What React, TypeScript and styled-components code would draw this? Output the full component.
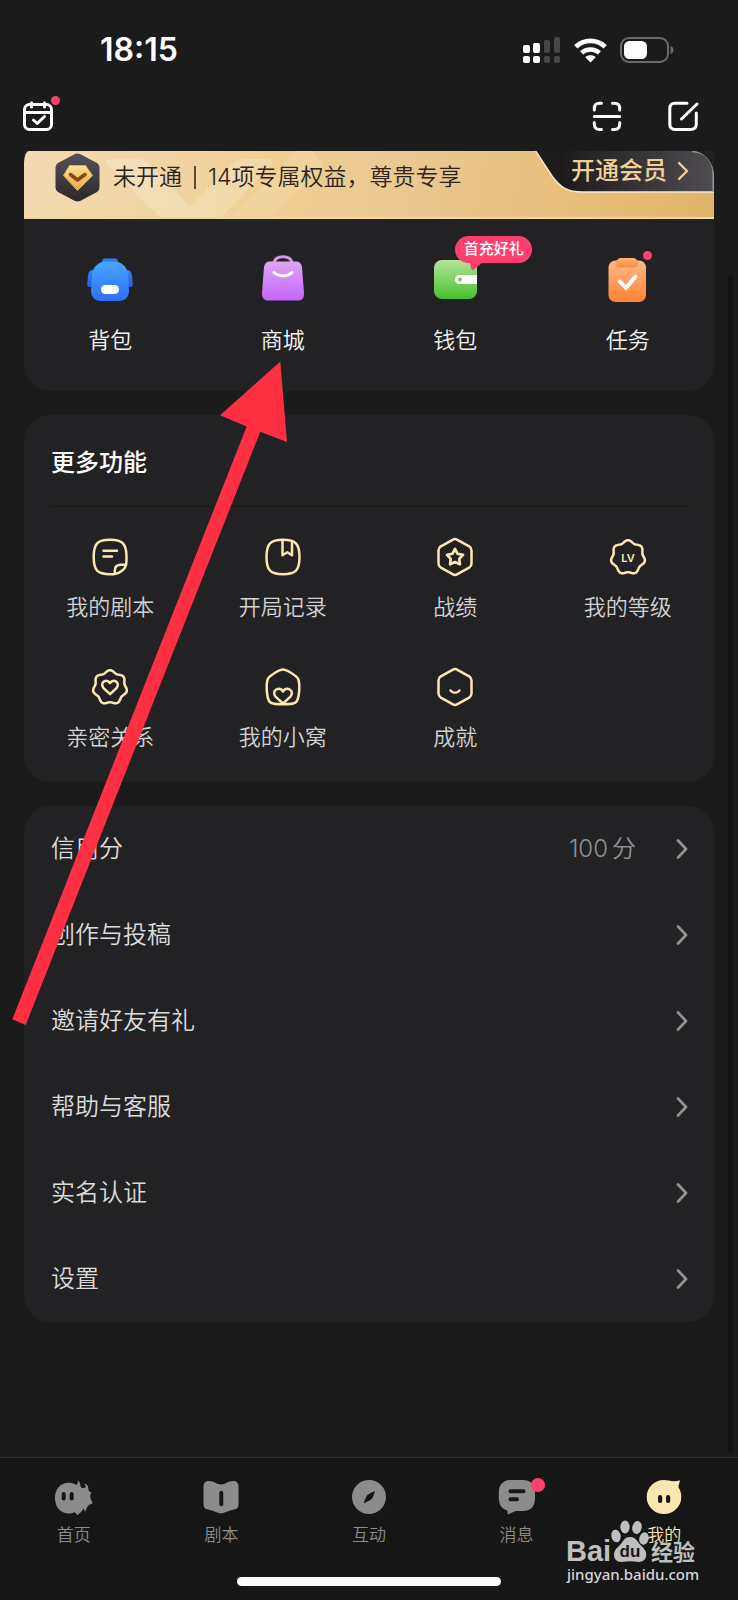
import React from "react";
import styled, { createGlobalStyle } from "styled-components";

const GlobalStyle = createGlobalStyle`
  *, *::before, *::after { box-sizing: border-box; }
  body {
    margin: 0;
    background: #1b1b1b;
    color: #f4f4f4;
    font-family: Inter, "Noto Sans CJK SC", sans-serif;
    font-weight: 350;
  }
  button {
    border: 0;
    padding: 0;
    background: none;
    color: inherit;
    font: inherit;
    cursor: pointer;
  }
  a { color: inherit; text-decoration: none; }
  svg { display: block; }
`;

const cream = "#fde6b0";
const pink = "#ff3f70";

const Page = styled.div`
  position: relative;
  min-height: 100vh;
  display: flex;
  flex-direction: column;
`;

const StatusBar = styled.header`
  height: 100px;
  padding: 0 64px 0 100px;
  display: flex;
  align-items: center;
  justify-content: space-between;
`;

const Clock = styled.time`
  font-size: 32px;
  line-height: 40px;
  font-weight: 600;
  color: #fff;
`;

const StatusIcons = styled.div`
  display: flex;
  align-items: center;
  gap: 13px;
`;

const TopBar = styled.div`
  display: flex;
  align-items: flex-start;
  justify-content: space-between;
  padding: 0 39px 19px 22px;
`;

const TopActions = styled.div`
  display: flex;
  gap: 44px;
`;

const IconButton = styled.button`
  position: relative;
  width: 32px;
  height: 32px;
`;

const Dot = styled.span<{ $size: number; $top: number; $right: number }>`
  position: absolute;
  width: ${(p) => p.$size}px;
  height: ${(p) => p.$size}px;
  top: ${(p) => p.$top}px;
  right: ${(p) => p.$right}px;
  border-radius: 50%;
  background: ${pink};
`;

const Content = styled.main`
  flex: 1;
  display: flex;
  flex-direction: column;
  gap: 24px;
  padding: 0 24px 48px;
`;

const Card = styled.section<{ $flatTop?: boolean }>`
  background: #222224;
  border-radius: ${(p) => (p.$flatTop ? "0 0 26px 26px" : "26px")};
`;

const Banner = styled.div`
  position: relative;
  height: 68px;
  display: flex;
  align-items: flex-start;
  overflow: hidden;
  border-radius: 5px 22px 0 0 / 12px 26px 0 0;
  border-bottom: 2px solid #f4d798;
  background: linear-gradient(100deg, #f3dab0 0%, #f1d6a6 18%, #efce8f 38%, #ebca94 50%, #e8c282 72%, #e2b468 100%);
`;

const BannerArt = styled.svg`
  position: absolute;
  left: 0;
  top: 0;
`;

const BannerInfo = styled.div`
  position: relative;
  flex: 1;
  display: flex;
  align-items: center;
  gap: 13px;
  height: 52px;
  padding-left: 31px;
  color: #2c231b;
  font-size: 23px;
  line-height: 32px;
  white-space: nowrap;
`;

const BannerText = styled.span`
  display: flex;
  align-items: center;
  gap: 12px;
`;

const BannerDivider = styled.i`
  width: 2px;
  height: 23px;
  background: #5c4a36;
`;

const VipButton = styled.button`
  position: relative;
  width: 180px;
  height: 43px;
  padding: 0 25px 3px 37px;
  display: flex;
  align-items: center;
  justify-content: space-between;
  color: #f1cf95;
  font-size: 24px;
  line-height: 32px;
  font-weight: 500;
  white-space: nowrap;

  > span, > svg { position: relative; }
  > svg:first-child { position: absolute; left: 0; top: 0; }
`;

const Shortcuts = styled.nav`
  display: grid;
  grid-template-columns: repeat(4, 1fr);
  padding: 35px 0 37px;
`;

const Shortcut = styled.button`
  display: flex;
  flex-direction: column;
  align-items: center;
  gap: 24px;
  font-size: 22px;
  line-height: 28px;
`;

const ShortcutIcon = styled.span`
  position: relative;
  width: 48px;
  height: 48px;
`;

const Bubble = styled.span`
  position: absolute;
  left: 24px;
  top: -18px;
  height: 27px;
  width: 77px;
  border-radius: 14px;
  background: ${pink};
  color: #fff;
  font-size: 15px;
  line-height: 26px;
  font-weight: 500;
  text-align: center;
  white-space: nowrap;

  > svg { position: absolute; left: 15px; top: 26px; }
`;

const CardTitle = styled.h2`
  margin: 0 25px;
  padding: 31px 2px 27px;
  border-bottom: 1px solid #19191a;
  font-size: 24px;
  line-height: 33px;
  font-weight: 500;
  color: #fff;
`;

const FeatureGrid = styled.nav`
  display: grid;
  grid-template-columns: repeat(4, 1fr);
  row-gap: 46px;
  padding: 30px 0 31px;
`;

const Feature = styled.button`
  display: flex;
  flex-direction: column;
  align-items: center;
  gap: 16px;
  color: #d2d2d3;
  font-size: 22px;
  line-height: 28px;
`;

const Row = styled.button`
  width: 100%;
  height: 86px;
  display: flex;
  align-items: center;
  padding: 0 26px 0 27px;
  color: #dcdcdd;
  font-size: 24px;
  line-height: 32px;
  text-align: left;
`;

const RowLabel = styled.span`
  flex: 1;
`;

const RowValue = styled.span`
  display: flex;
  gap: 4px;
  color: #909092;
  margin-right: 39px;
`;

const TabBar = styled.footer`
  position: relative;
  display: flex;
  flex-direction: column;
  align-items: center;
  gap: 31px;
  padding: 19px 0 14px;
  border-top: 1px solid #303030;
  background: #161616;
`;

const Tabs = styled.nav`
  width: 100%;
  display: grid;
  grid-template-columns: repeat(5, 1fr);
`;

const Tab = styled.a<{ $active?: boolean }>`
  display: flex;
  flex-direction: column;
  align-items: center;
  gap: 7px;
  color: ${(p) => (p.$active ? cream : "#8c8c8c")};
  font-size: 17px;
  line-height: 22px;
`;

const TabIcon = styled.span`
  position: relative;
  width: 40px;
  height: 40px;
`;

const HomeIndicator = styled.div`
  width: 264px;
  height: 9px;
  border-radius: 5px;
  background: #fff;
`;

const ScrollIndicator = styled.div`
  position: absolute;
  right: 5px;
  top: 275px;
  bottom: 148px;
  width: 5px;
  border-radius: 3px;
  background: #111;
`;

const ArrowOverlay = styled.svg`
  position: absolute;
  left: 12px;
  top: 361px;
  pointer-events: none;
`;

const Watermark = styled.div`
  position: absolute;
  right: 39px;
  bottom: 17px;
  width: 132px;
  display: flex;
  flex-direction: column;
  color: #bfbfbf;
  pointer-events: none;
`;

const WatermarkUrl = styled.span`
  font-family: "Noto Sans", "Open Sans", sans-serif;
  font-size: 15px;
  line-height: 18px;
  font-weight: 500;
  color: #d6d6d6;
`;

/* Seven-lobed badge outline used by the level and relationship icons. */
const badgePath = (() => {
  const steps = 140;
  const points: string[] = [];
  for (let i = 0; i < steps; i++) {
    const t = (i / steps) * Math.PI * 2;
    const r = 16 + 1.2 * Math.cos(7 * t);
    points.push(`${(20 + r * Math.sin(t)).toFixed(2)} ${(20.4 - r * Math.cos(t)).toFixed(2)}`);
  }
  return `M${points.join("L")}Z`;
})();

const hexPath =
  "M17.6 2.8Q20 1.4 22.4 2.8L34.2 9.4Q36.5 10.8 36.5 13.4V26.6Q36.5 29.2 34.2 30.6L22.4 37.2Q20 38.6 17.6 37.2L5.8 30.6Q3.5 29.2 3.5 26.6V13.4Q3.5 10.8 5.8 9.4Z";

function LineIcon({ children }: { children: React.ReactNode }) {
  return (
    <svg width="40" height="40" viewBox="0 0 40 40" fill="none" stroke={cream} strokeWidth="2.5" strokeLinecap="round" strokeLinejoin="round" aria-hidden="true">
      {children}
    </svg>
  );
}

const features = [
  {
    label: "我的剧本",
    icon: (
      <LineIcon>
        <path d="M24.8 37C23 37.2 21.5 37.2 20 37.2C7.5 37.2 3.7 33.5 3.7 20S7.5 2.8 20 2.8S36.5 6.500 36.5 20C36.5 23 36.5 25.5 36 28.2C35 32 30 36.5 24.8 37Z" />
        <path d="M24.8 36.5V33.5C24.8 29.5 27 27.7 31 27.7H35.8" />
        <path d="M13.5 13.7H27M13.5 19.4H22" />
      </LineIcon>
    ),
  },
  {
    label: "开局记录",
    icon: (
      <LineIcon>
        <path d="M20 2.8C32.5 2.8 36.5 6.5 36.5 20S32.5 37.2 20 37.2S3.5 33.5 3.5 20S7.5 2.8 20 2.8Z" />
        <path d="M19.500 3V18.300L24.300 15.300L29 18.300V4" />
      </LineIcon>
    ),
  },
  {
    label: "战绩",
    icon: (
      <LineIcon>
        <path d={hexPath} />
        <path d="M20 12L22.6 16.8L28 17.9L24.3 21.9L24.9 27.3L20 25.1L15.1 27.3L15.7 21.9L12 17.9L17.4 16.8Z" strokeWidth="2.7" />
      </LineIcon>
    ),
  },
  {
    label: "我的等级",
    icon: (
      <LineIcon>
        <path d={badgePath} />
        <text x="20" y="24.5" textAnchor="middle" fill={cream} stroke="none" fontFamily="Inter, sans-serif" fontSize="11" fontWeight="600">
          LV
        </text>
      </LineIcon>
    ),
  },
  {
    label: "亲密关系",
    icon: (
      <LineIcon>
        <path d={badgePath} />
        <path d="M20 27.2L13.8 21.3C11.5 19 11.8 15.8 13.8 14.6C16 13.3 18.500 14 20 16C21.500 14 24 13.3 26.2 14.6C28.2 15.8 28.5 19 26.2 21.3Z" />
      </LineIcon>
    ),
  },
  {
    label: "我的小窝",
    icon: (
      <LineIcon>
        <path d="M20 2.6C23 2.6 34 8.5 35.4 12.5C37 17.5 36.5 30 33.6 34.5C32 37 28 37.3 20 37.3S8 37 6.4 34.5C3.5 30 3 17.5 4.6 12.5C6 8.5 17 2.6 20 2.6Z" />
        <path d="M20 36.5L12.8 29.8C10.3 27.2 10.8 23.8 13.2 22.5C15.8 21.2 18.5 22 20 24.5C21.5 22 24.2 21.2 26.8 22.5C29.2 23.8 29.7 27.2 27.2 29.8Z" />
      </LineIcon>
    ),
  },
  {
    label: "成就",
    icon: (
      <LineIcon>
        <path d={hexPath} />
        <path d="M15.5 23.5C18 26.6 22 26.6 24.5 23.5" />
      </LineIcon>
    ),
  },
];

function GradientDef({ id, from, to }: { id: string; from: string; to: string }) {
  return (
    <linearGradient id={id} x1="0" y1="0" x2="0" y2="1">
      <stop offset="0" stopColor={from} />
      <stop offset="1" stopColor={to} />
    </linearGradient>
  );
}

const shortcuts = [
  {
    label: "背包",
    icon: (
      <svg width="48" height="48" viewBox="0 0 48 48" aria-hidden="true">
        <defs>
          <GradientDef id="pack" from="#48a6ff" to="#2b6ff6" />
          <GradientDef id="strap" from="#3280f5" to="#2360d8" />
        </defs>
        <rect x="16" y="4.5" width="16" height="7" rx="3" fill="url(#strap)" />
        <path d="M8 16C4 16 2.5 17.5 2 22L1.2 30C1 32.5 2 33 4 33H8ZM40 16C44 16 45.5 17.5 46 22L46.8 30C47 32.5 46 33 44 33H40Z" fill="url(#strap)" />
        <path d="M18 7.5H30C38 9 42 15 42 22L43 37C43 43 39 47 33 47H15C9 47 5 43 5 37L6 22C6 15 10 9 18 7.5Z" fill="url(#pack)" />
        <rect x="15" y="31" width="18" height="9" rx="4.5" fill="#fff" />
      </svg>
    ),
  },
  {
    label: "商城",
    icon: (
      <svg width="48" height="48" viewBox="0 0 48 48" aria-hidden="true">
        <defs>
          <GradientDef id="bag" from="#dea5f3" to="#c565fa" />
        </defs>
        <path d="M14.5 9C17 0.5 31 0.5 33.5 9" fill="none" stroke="#d596ee" strokeWidth="3" />
        <path d="M11 7.500H37C40.5 7.5 42.5 9.5 43 13L45 39C45.2 44 43 46.5 39 46.5H9C5 46.5 2.8 44 3 39L5 13C5.5 9.5 7.5 7.5 11 7.5Z" fill="url(#bag)" />
        <path d="M15 18.5C20 23 28 23 33 18.5" fill="none" stroke="#fff" strokeWidth="3" strokeLinecap="round" />
      </svg>
    ),
  },
  {
    label: "钱包",
    badge: "首充好礼",
    icon: (
      <svg width="48" height="48" viewBox="0 0 48 48" aria-hidden="true">
        <defs>
          <GradientDef id="wallet" from="#b5e39e" to="#47c12b" />
        </defs>
        <rect x="3" y="6" width="43" height="39" rx="8" fill="url(#wallet)" />
        <path d="M46 21H28.5C25.5 21 24 23 24 25.5S25.5 30 28.5 30H46Z" fill="#fff" />
        <circle cx="29" cy="25.5" r="2" fill="#6ecb58" />
      </svg>
    ),
  },
  {
    label: "任务",
    dot: true,
    icon: (
      <svg width="48" height="48" viewBox="0 0 48 48" aria-hidden="true">
        <defs>
          <GradientDef id="board" from="#ffb98a" to="#ff8232" />
          <GradientDef id="clip" from="#ffb478" to="#ff8a38" />
        </defs>
        <rect x="4.5" y="6.5" width="37.5" height="41.5" rx="7" fill="url(#board)" />
        <path d="M17 4H29C31 4 34 6 34.5 9C34.5 12 32 13.5 29 13.5H17C14 13.5 11.5 12 11.5 9C12 6 15 4 17 4Z" fill="url(#clip)" />
        <path d="M16 27.5L22 34L31.5 22.5" fill="none" stroke="#fff" strokeWidth="4" strokeLinecap="round" strokeLinejoin="round" />
      </svg>
    ),
  },
];

const rows: { label: string; value?: string; unit?: string }[] = [
  { label: "信用分", value: "100", unit: "分" },
  { label: "创作与投稿" },
  { label: "邀请好友有礼" },
  { label: "帮助与客服" },
  { label: "实名认证" },
  { label: "设置" },
];

const tabs = [
  {
    label: "首页",
    art: (
      <>
        <path
          fill="currentColor"
          d="M15 5.7C18 5.6 20.5 6.6 22.6 8C24 6.5 24 5 23.7 3C26 5 26 7 26.5 9C27 11.5 29.5 11.5 31.2 10.5C32.5 9.3 31.5 7.5 29.5 6.5C32.5 6.8 34.3 8.5 34.3 11C34.3 13 34.5 14.5 37.5 15.5C36 17.5 36 19.5 36.5 21.5C37 23.5 38.5 25 38.8 26.3C36 27 34 28.5 33 30.5C32.5 32 32 33.5 30.8 34.7C30.7 33.5 30.3 32.5 29.5 31.5C28.5 34 26 36 23.7 38C22.5 37 21.5 36 20.5 35.3C18.7 36.2 17 36.5 15 36.5C6 36.5 1 29.5 1 21S6 5.7 15 5.7Z"
        />
        <rect x="7.7" y="15" width="4" height="8.5" rx="2" fill="#161616" />
        <rect x="15.7" y="15" width="4" height="8.5" rx="2" fill="#161616" />
      </>
    ),
  },
  {
    label: "剧本",
    art: (
      <>
        <path
          fill="currentColor"
          d="M8 4C13 4 16 7.5 20 7.5S27 4 32 4C35.5 4 37.5 6 37.5 9.5V27C37.5 30.5 36 32 33 32.5C27.5 33.3 24 36.3 20 36.3S12.5 33.3 7 32.5C4 32 2.5 30.5 2.5 27V9.5C2.5 6 4.500 4 8 4Z"
        />
        <rect x="18.3" y="13.7" width="4" height="15.5" rx="2" fill="#161616" />
      </>
    ),
  },
  {
    label: "互动",
    art: (
      <>
        <circle cx="20" cy="20" r="17" fill="currentColor" />
        <path fill="#161616" d="M15 26.5C15 24 16 22.5 17 20.5C18.5 17 20.5 16.5 26 14C24.5 19 24 21.5 20.5 23.5C18.5 24.6 17 25 15 26.5Z" />
      </>
    ),
  },
  {
    label: "消息",
    dot: true,
    art: (
      <>
        <path
          fill="currentColor"
          d="M14 3H26C34 3 38 8 38 15V21C38 29 34 34 26 34H18.5L10.8 37.5L10.3 33.5C4.5 32 2 27.5 1.8 21V15C2 8 6 3 14 3Z"
        />
        <path d="M13.5 14.3H26.5M13.5 22.2H20" stroke="#161616" strokeWidth="4" strokeLinecap="round" />
      </>
    ),
  },
  {
    label: "我的",
    active: true,
    art: (
      <>
        <path
          fill="currentColor"
          d="M20 3C24 3 30 5.5 35.8 3.3C36 6 34 8.5 34.5 10.5C36.5 13 37.3 16.5 37.3 20C37.3 29.5 29.5 37 20 37S2.7 29.5 2.7 20S10.5 3 20 3Z"
        />
        <rect x="14" y="18" width="4.2" height="8" rx="2.1" fill="#161616" />
        <rect x="22" y="18" width="4.2" height="8" rx="2.1" fill="#161616" />
      </>
    ),
  },
];

export default function App() {
  return (
    <>
      <GlobalStyle />
      <Page>
        <StatusBar>
          <Clock>18:15</Clock>
          <StatusIcons>
            <svg width="38" height="26" viewBox="0 0 38 26" aria-hidden="true">
              <g fill="#fff">
                <rect x="0" y="8" width="7" height="8" rx="2" />
                <rect x="0" y="19" width="7" height="7" rx="2" />
                <rect x="10" y="6" width="7" height="10" rx="2" />
                <rect x="10" y="19" width="7" height="7" rx="2" />
              </g>
              <g fill="#474747">
                <rect x="21" y="3" width="6" height="13" rx="2" />
                <rect x="21" y="19" width="6" height="7" rx="2" />
                <rect x="31" y="0" width="6" height="16" rx="2" />
                <rect x="31" y="19" width="6" height="7" rx="2" />
              </g>
            </svg>
            <svg width="33" height="25" viewBox="0 0 33 25" aria-hidden="true">
              <path d="M16.5 24.5L11.3 19.2C14 16.6 19 16.6 21.7 19.2Z" fill="#fff" />
              <path d="M7.6 14.8C12.5 10.3 20.5 10.3 25.4 14.8" fill="none" stroke="#fff" strokeWidth="4.5" />
              <path d="M1.8 8.8C10 1 23 1 31.2 8.8" fill="none" stroke="#fff" strokeWidth="4.8" />
            </svg>
            <svg width="54" height="26" viewBox="0 0 54 26" aria-hidden="true">
              <rect x="1" y="1" width="47" height="24" rx="8" fill="none" stroke="#6b6b6b" strokeWidth="2" />
              <rect x="4" y="4" width="23" height="18" rx="5.5" fill="#fff" />
              <path d="M50.5 9C54.5 10 54.5 16 50.5 17Z" fill="#6b6b6b" />
            </svg>
          </StatusIcons>
        </StatusBar>

        <TopBar>
          <IconButton aria-label="签到">
            <svg width="32" height="32" viewBox="0 0 32 32" fill="none" stroke="#fff" strokeWidth="3" strokeLinecap="round" strokeLinejoin="round">
              <rect x="2.5" y="4.5" width="27" height="25" rx="5" />
              <path d="M3 12.5H29M9.5 2.8V7M22.5 2.8V7M11.5 20L15.2 23.5L22.5 16.5" />
            </svg>
            <Dot $size={9} $top={-4} $right={-6} />
          </IconButton>
          <TopActions>
            <IconButton aria-label="扫一扫">
              <svg width="32" height="32" viewBox="0 0 32 32" fill="none" stroke="#fff" strokeWidth="3" strokeLinecap="round">
                <path d="M3.3 10V8.5C3.3 5 5 3.3 8.5 3.3H10.5M21.5 3.3H23.5C27 3.3 28.7 5 28.7 8.5V10M28.7 22.5V24C28.7 27.5 27 29.5 23.5 29.5H21.5M10.5 29.5H8.5C5 29.5 3.3 27.5 3.3 24V22.5M3.3 16.6H28.7" />
              </svg>
            </IconButton>
            <IconButton aria-label="编辑">
              <svg width="32" height="32" viewBox="0 0 32 32" fill="none" stroke="#fff" strokeWidth="3" strokeLinecap="round">
                <path d="M20 3.3H8C4.5 3.3 2.8 5 2.8 8.5V24C2.8 27.5 4.5 29.5 8 29.5H23.5C27.5 29.5 29.3 27.5 29.3 24V13M30 4L14.5 19" />
              </svg>
            </IconButton>
          </TopActions>
        </TopBar>

        <Content>
          <Card $flatTop>
            <Banner>
              <BannerArt width="320" height="68" viewBox="0 0 320 68" aria-hidden="true">
                <path d="M88 8H115Q120 8 123 11L166 55L210 11Q213 8 218 8H246Q252 8 247 14L196 68H138L83 14Q79 8 88 8Z" fill="#fff" opacity=".2" />
                <path d="M272 0H288L301 14L244 68H206Z" fill="#fff" opacity=".12" />
              </BannerArt>
              <BannerInfo>
                <svg width="45" height="49" viewBox="0 0 45 49" aria-hidden="true">
                  <defs>
                    <GradientDef id="hex" from="#55515a" to="#2a282b" />
                    <GradientDef id="gem" from="#fbe093" to="#eaa93c" />
                  </defs>
                  <path d="M19.5 1.2Q22.5 -0.3 25.5 1.2L42 10Q44.5 11.5 44.5 14.5V34.5Q44.5 37.5 42 39L25.5 47.8Q22.5 49.3 19.5 47.8L3 39Q0.5 37.5 0.5 34.5V14.5Q0.5 11.5 3 10Z" fill="url(#hex)" />
                  <path d="M14.5 12.5H30.5L37.5 22.5L22.5 37.5L8.5 22.5Z" fill="url(#gem)" stroke="#e9ac49" strokeWidth="1" strokeLinejoin="round" />
                  <path d="M15.5 21.5L22.5 27L30 21.5" fill="none" stroke="#884515" strokeWidth="3.5" strokeLinecap="round" strokeLinejoin="round" />
                </svg>
                <BannerText>
                  <span>未开通</span>
                  <BannerDivider />
                  <span>14项专属权益，尊贵专享</span>
                </BannerText>
              </BannerInfo>
              <VipButton>
                <svg width="180" height="43" viewBox="0 0 180 43" aria-hidden="true">
                  <defs>
                    <linearGradient id="tab" x1="0" y1="0" x2="1" y2="0">
                      <stop offset=".15" stopColor="#1d1b1c" />
                      <stop offset=".55" stopColor="#343235" />
                      <stop offset="1" stopColor="#504e53" />
                    </linearGradient>
                  </defs>
                  <path d="M1 -1L18 25C26 36.5 34 41 48 41H181V-1Z" fill="url(#tab)" />
                  <path d="M1 -1L18 25C26 36.5 34 41 48 41H181" fill="none" stroke="#f6e9d2" strokeWidth="1.5" />
                  <path d="M158 0.5C172 1 179.3 10 179.3 25V41" fill="none" stroke="#9b999d" strokeWidth="1.5" />
                </svg>
                <span>开通会员</span>
                <svg width="12" height="20" viewBox="0 0 12 20" fill="none" stroke="currentColor" strokeWidth="2.4" strokeLinecap="round" strokeLinejoin="round" aria-hidden="true">
                  <path d="M2 2L10 10L2 18" />
                </svg>
              </VipButton>
            </Banner>
            <Shortcuts>
              {shortcuts.map((s) => (
                <Shortcut key={s.label}>
                  <ShortcutIcon>
                    {s.icon}
                    {s.badge && (
                      <Bubble>
                        {s.badge}
                        <svg width="14" height="9" viewBox="0 0 14 9" aria-hidden="true">
                          <path d="M0 0H13L4 7.5Q1.5 9 1 6Z" fill={pink} />
                        </svg>
                      </Bubble>
                    )}
                    {s.dot && <Dot $size={9} $top={-3} $right={0} />}
                  </ShortcutIcon>
                  {s.label}
                </Shortcut>
              ))}
            </Shortcuts>
          </Card>

          <Card>
            <CardTitle>更多功能</CardTitle>
            <FeatureGrid>
              {features.map((f) => (
                <Feature key={f.label}>
                  {f.icon}
                  {f.label}
                </Feature>
              ))}
            </FeatureGrid>
          </Card>

          <Card>
            {rows.map((r) => (
              <Row key={r.label}>
                <RowLabel>{r.label}</RowLabel>
                {r.value && (
                  <RowValue>
                    <span>{r.value}</span>
                    <span>{r.unit}</span>
                  </RowValue>
                )}
                <svg width="13" height="20" viewBox="0 0 13 20" fill="none" stroke="#949496" strokeWidth="2.6" strokeLinecap="round" strokeLinejoin="round" aria-hidden="true">
                  <path d="M3 1.5L11 10L3 18.5" />
                </svg>
              </Row>
            ))}
          </Card>
        </Content>

        <TabBar>
          <Tabs>
            {tabs.map((t) => (
              <Tab key={t.label} href="#" $active={t.active}>
                <TabIcon>
                  <svg width="40" height="40" viewBox="0 0 40 40" aria-hidden="true">
                    {t.art}
                  </svg>
                  {t.dot && <Dot $size={14} $top={1} $right={-8} />}
                </TabIcon>
                {t.label}
              </Tab>
            ))}
          </Tabs>
          <HomeIndicator />
          <Watermark>
            <svg width="132" height="54" viewBox="0 -9 132 54" overflow="visible" aria-hidden="true">
              <g fill="#bfbfbf">
                <text x="-1" y="41" fontFamily="Liberation Sans, sans-serif" fontSize="29" fontWeight="700">
                  Bai
                </text>
                <text x="84" y="40" fontFamily="Noto Sans CJK SC, sans-serif" fontSize="22" fontWeight="700">
                  经验
                </text>
                <ellipse cx="49" cy="16" rx="4.7" ry="6.3" transform="rotate(-12 49 16)" />
                <ellipse cx="58" cy="7" rx="4.7" ry="6.5" />
                <ellipse cx="70" cy="7.5" rx="4.7" ry="6.5" transform="rotate(12 70 7.5)" />
                <ellipse cx="77" cy="18.500" rx="4.7" ry="6.3" transform="rotate(16 77 18.5)" />
                <path d="M63 17C69 17 70.5 22 74.500 26C78 29.5 80 32 79 36.5C78 41 74 42.5 70 41.7C66 41 60 41 56 41.7C52 42.5 48 41 47.2 36.5C46.5 32 48.5 29 52 26C56 22 57 17 63 17Z" />
              </g>
              <text x="63" y="37" textAnchor="middle" fill="#161616" fontFamily="Liberation Sans, sans-serif" fontSize="17" fontWeight="700">
                du
              </text>
            </svg>
            <WatermarkUrl>jingyan.baidu.com</WatermarkUrl>
          </Watermark>
        </TabBar>

        <ScrollIndicator />
        <ArrowOverlay width="276" height="665" viewBox="12 361 276 665" aria-hidden="true">
          <path d="M280.3 361.5L287 442L260.3 431.7L25.7 1025L12.3 1019.3L246.7 426.5L220 415.3Z" fill="#ff3041" />
        </ArrowOverlay>
      </Page>
    </>
  );
}
